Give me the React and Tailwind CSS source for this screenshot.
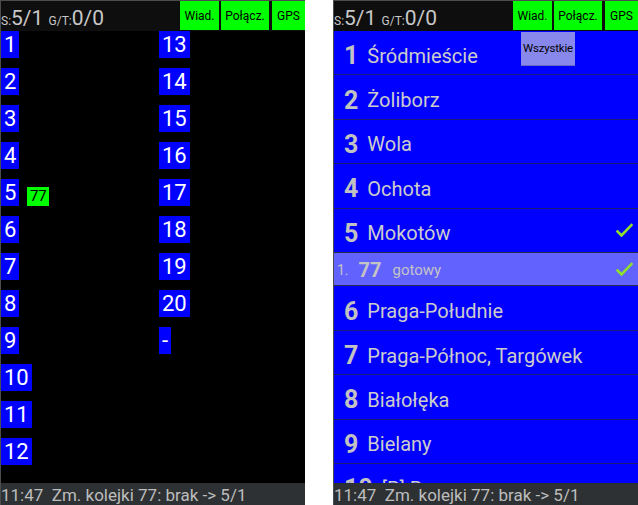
import React from "react";

const font = { fontFamily: "Roboto, 'Noto Sans', sans-serif" };

function Header() {
  return (
    <div className="flex h-[30px] bg-[#0e0e0e]">
      <div className="flex-1 h-[30px] leading-[30px] pt-[2px] text-[#c8c8c8] whitespace-pre overflow-hidden">
        <span className="text-[12px] leading-none">S:</span>
        <span className="text-[21px]">5/1 </span>
        <span className="text-[12px] leading-none">G/T:</span>
        <span className="text-[21px]">0/0</span>
      </div>
      <div className="flex h-[29px] gap-[2px]">
        <div className="w-[39px] bg-[#00ff00] text-black text-[12px] flex items-center justify-center">Wiad.</div>
        <div className="w-[48px] bg-[#00ff00] text-black text-[12px] flex items-center justify-center">Połącz.</div>
        <div className="w-[33px] ml-[1px] bg-[#00ff00] text-black text-[12px] flex items-center justify-center">GPS</div>
      </div>
    </div>
  );
}

function StatusBar() {
  return (
    <div className="h-[22px] shrink-0 bg-[#2e3133] text-[#bdbdbd] text-[17px] leading-[20px] pt-[2px] whitespace-pre overflow-hidden">
      11:47  Zm. kolejki 77: brak -&gt; 5/1
    </div>
  );
}

function Box({ label }) {
  return (
    <div className="h-[27px] px-[3px] bg-[#0000ff] text-white text-[22px] leading-[27px] w-fit">
      {label}
    </div>
  );
}

function LeftScreen() {
  const col1 = ["1", "2", "3", "4", "5", "6", "7", "8", "9", "10", "11", "12"];
  const col2 = ["13", "14", "15", "16", "17", "18", "19", "20", "-"];
  return (
    <div className="w-[305px] h-[505px] shrink-0 border-l border-t border-[#4c4c4c] bg-black flex flex-col overflow-hidden">
      <Header />
      <div className="flex-1 flex overflow-hidden">
        <div className="w-[158px] flex flex-col gap-[10px]">
          {col1.map((n) =>
            n === "5" ? (
              <div key={n} className="flex items-end">
                <Box label={n} />
                <div className="ml-[8px] w-[22px] h-[19px] bg-[#00ff00] text-black text-[15px] leading-[19px] text-center">
                  77
                </div>
              </div>
            ) : (
              <Box key={n} label={n} />
            )
          )}
        </div>
        <div className="flex flex-col gap-[10px]">
          {col2.map((n) => (
            <Box key={n} label={n} />
          ))}
        </div>
      </div>
      <StatusBar />
    </div>
  );
}

function Check() {
  return (
    <svg width="17" height="14" viewBox="0 0 17 14" className="shrink-0">
      <polyline points="1.5,8.5 5.5,12.5 15.5,2" fill="none" stroke="#8fe12b" strokeWidth="2.6" strokeLinecap="square" />
    </svg>
  );
}

function Row({ num, name, check, dark }) {
  return (
    <div className={`h-[44.4px] shrink-0 flex items-center pt-[6px] pl-[10px] pr-[5px] border-b ${dark ? "border-[#2c2c4a]" : "border-[#1e1e78]"}`}>
      <span className="text-[25px] font-bold text-[#c2c2c2] leading-none">{num}</span>
      <span className="ml-[9px] text-[20px] text-[#cccccc] leading-none flex-1 whitespace-nowrap">{name}</span>
      {check && <div className="-mt-[6px]"><Check /></div>}
    </div>
  );
}

function RightScreen() {
  return (
    <div className="relative w-[305px] h-[505px] shrink-0 border-l border-t border-[#4c4c4c] bg-[#0000ff] flex flex-col overflow-hidden">
      <Header />
      <div className="flex-1 flex flex-col overflow-hidden">
        <Row num="1" name="Śródmieście" />
        <Row num="2" name="Żoliborz" />
        <Row num="3" name="Wola" />
        <Row num="4" name="Ochota" />
        <Row num="5" name="Mokotów" check dark />
        <div className="h-[33.5px] shrink-0 flex items-center pt-[2px] pl-[3px] pr-[5px] bg-[#6262ff] border-b border-[#2c2c4a]">
          <span className="text-[14px] text-[#c4c4c4] leading-none">1.</span>
          <span className="ml-[10px] text-[20px] font-bold text-[#c4c4c4] leading-none">77</span>
          <span className="ml-[11px] text-[15px] text-[#c4c4c4] leading-none flex-1">gotowy</span>
          <div className="-mt-[2px]"><Check /></div>
        </div>
        <Row num="6" name="Praga-Południe" />
        <Row num="7" name="Praga-Północ, Targówek" />
        <Row num="8" name="Białołęka" />
        <Row num="9" name="Bielany" />
        <Row num="10" name="[P] Bemowo" />
      </div>
      <StatusBar />
      <div className="absolute left-[187px] top-[31px] w-[54px] h-[34px] bg-[#8787ec] border-b border-[#6a6ac0] text-black text-[11.5px] tracking-[-0.2px] flex items-center justify-center whitespace-nowrap">
        Wszystkie
      </div>
    </div>
  );
}

export default function App() {
  return (
    <div className="w-[638px] h-[505px] bg-white flex overflow-hidden" style={font}>
      <LeftScreen />
      <div className="w-[28px] shrink-0" />
      <RightScreen />
    </div>
  );
}
